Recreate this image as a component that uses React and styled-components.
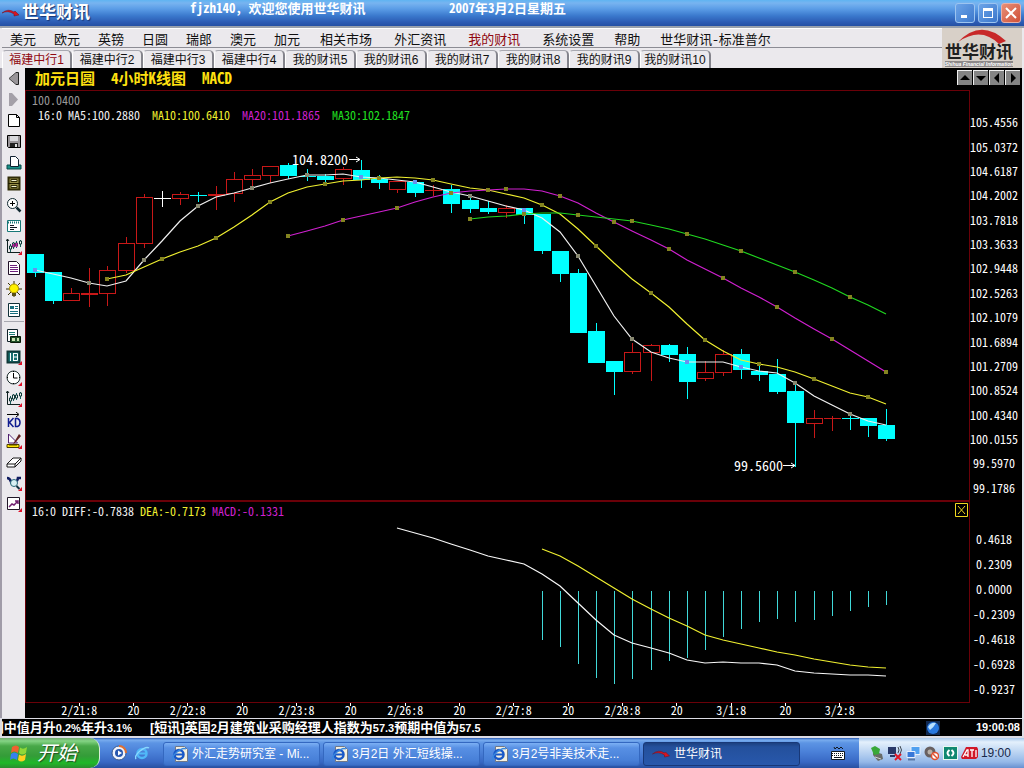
import React from "react";
import styled, { createGlobalStyle, css } from "styled-components";

const MONO = '"Noto Sans Mono CJK SC", "Noto Sans CJK SC", "Liberation Mono", monospace';
const SANS = '"Liberation Sans", "Noto Sans CJK SC", sans-serif';
const RED = "#c81818";
const CYAN = "#00ffff";
const WHITE = "#ffffff";
const FRAME = "#6a0008";

const GlobalStyle = createGlobalStyle`
  * { box-sizing: border-box; }
  body { margin: 0; background: #000; font-family: ${SANS}; font-size: 12px; line-height: 16px; }
  button { font: inherit; color: inherit; border: 0; padding: 0; margin: 0; background: none; }
  svg { display: block; flex: none; }
  h1, p { margin: 0; }
`;

const Page = styled.div`
  display: flex;
  flex-direction: column;
  min-height: 100vh;
`;

/* Title bar */
const TitleBar = styled.header`
  display: grid;
  grid-template-columns: 190px 259px 1fr auto;
  height: 26px;
  padding-right: 3px;
  color: #fff;
  background: linear-gradient(#5fb4f2 0, #78b4f0 3px, #5a9ce6 9px, #3a78cc 16px, #2c5cb4 22px, #2450a4 26px);
`;
const Brand = styled.h1`
  display: flex;
  align-items: center;
  gap: 3px;
  padding-left: 2px;
  font-size: 17px;
  line-height: 24px;
  font-weight: 700;
  text-shadow: 1px 1px 1px #1a3470;
`;
const TitleText = styled.p`
  font: 700 13px/16px ${MONO};
  white-space: pre;
`;
const WindowButtons = styled.div`
  display: flex;
  gap: 3px;
  align-items: center;
`;
const WindowButton = styled.button`
  display: grid;
  place-items: center;
  width: 20px;
  height: 20px;
  border: 1px solid ${(p) => (p.$danger ? "#e8b0a8" : "#9cc4f0")};
  border-radius: 3px;
  background: ${(p) =>
    p.$danger ? "linear-gradient(135deg, #e89078, #d05038)" : "linear-gradient(135deg, #6ca4e8, #3c78cc)"};
`;

/* Menu and tabs */
const TopArea = styled.div`
  display: grid;
  grid-template-columns: 1fr 80px;
  padding: 0 2px;
  border-top: 2px solid #98a0ac;
  background: #ebe9ed;
`;
const Menu = styled.nav`
  display: flex;
  height: 20px;
  border-top: 1px solid #fff;
  border-bottom: 1px solid #8c8c94;
`;
const MenuItem = styled.button`
  padding: 1px ${(p) => (p.$wide ? 11 : 9)}px 0 ${(p) => (p.$wide ? 11 : 9)}px;
  font: 13px/18px ${MONO};
  white-space: nowrap;
  color: ${(p) => (p.$active ? "#900810" : "#101010")};
  &:first-child { padding-left: 8px; }
`;
const Tabs = styled.div`
  display: flex;
  height: 20px;
  padding-top: 2px;
`;
const Tab = styled.button`
  width: 71px;
  height: 18px;
  font-size: 12px;
  line-height: 16px;
  white-space: nowrap;
  border-top: 1px solid #a8a8b0;
  border-right: 2px solid #84848c;
  border-left: 1px solid #fff;
  border-radius: 4px 5px 0 0;
  color: ${(p) => (p.$active ? "#900810" : "#101010")};
  &:first-child { width: 70px; }
`;
const Logo = styled.div`
  display: flex;
  flex-direction: column;
  align-items: center;
  height: 40px;
  padding-right: 6px;
  background: #d8d0c8;
`;
const LogoName = styled.span`
  font: 700 17px/17px ${SANS};
  color: #202020;
`;
const LogoSub = styled.span`
  font: italic 700 5px/6px "Liberation Sans", sans-serif;
  color: #fff;
  background: #8c8888;
`;

/* Work area */
const Work = styled.main`
  display: grid;
  grid-template-columns: 25px 1fr;
  flex: 1;
`;
const Toolbar = styled.aside`
  display: flex;
  flex-direction: column;
  border-left: 2px solid #a09ca8;
  background: #ebe9ed;
`;
const Tool = styled.button`
  display: grid;
  place-items: center;
  height: 21px;
`;
const ToolDivider = styled.hr`
  width: 20px;
  height: 1px;
  margin: 1px auto 3px;
  border: 0;
  background: #a8a8b0;
`;
const Charts = styled.section`
  display: flex;
  flex-direction: column;
  min-width: 0;
  border-right: 2px solid #e4e4ec;
  background: #000;
  color: #fff;
`;
const ChartHeader = styled.div`
  display: flex;
  justify-content: space-between;
  height: 22px;
  padding: 2px 2px 4px 10px;
`;
const ChartTitle = styled.div`
  display: flex;
  gap: 16px;
  font: 700 15px/16px ${MONO};
  color: #ffe010;
`;
const Scrollers = styled.div`
  display: flex;
  gap: 1px;
`;
const ScrollButton = styled.button`
  display: grid;
  place-items: center;
  width: 15px;
  height: 15px;
  border-top: 1px solid #f0f0f0;
  border-left: 1px solid #f0f0f0;
  background: #848484;
`;
const ChartGrid = styled.div`
  display: grid;
  grid-template-columns: minmax(0, 1fr) 52px;
`;
const Plot = styled.div`
  position: relative;
  border: solid ${FRAME};
  border-width: ${(p) => (p.$upper ? "1px 1px 2px" : "0 1px 1px")};
  svg.plot { width: 100%; height: auto; }
`;
const Legend = styled.div`
  position: absolute;
  top: 1px;
  left: 6px;
  font: 12px/15px ${MONO};
`;
const LegendRow = styled.div`
  display: flex;
  gap: ${(p) => (p.$indent ? 12 : 6)}px;
  padding-left: ${(p) => (p.$indent ? 6 : 0)}px;
`;
const LegendItem = styled.span`
  color: ${(p) => p.$color};
  white-space: pre;
`;
const ClosePane = styled.button`
  position: absolute;
  top: 1px;
  right: 1px;
  width: 13px;
  height: 14px;
`;
const Axis = styled.ol`
  display: grid;
  grid-auto-rows: 1fr;
  align-items: center;
  justify-items: center;
  list-style: none;
  margin: 0;
  padding: ${(p) => (p.$upper ? "20px 4px 2px 0" : "24px 4px 2px 0")};
  font: 12px/14px ${MONO};
`;
const TimeAxis = styled.ol`
  display: grid;
  grid-template-columns: repeat(15, 1fr);
  height: 15px;
  list-style: none;
  margin: 0;
  padding: 0 103px 0 27px;
  text-align: center;
  font: 12px/13px ${MONO};
`;
const TimeMark = styled.li`
  background: linear-gradient(#fff, #fff) center top / 1px 3px no-repeat;
`;

/* Ticker */
const Ticker = styled.footer`
  display: flex;
  align-items: center;
  height: 20px;
  padding: 0 2px 0 0;
  border: solid #dcdce4;
  border-width: 1px 2px 2px;
  font: 700 13px/17px ${SANS};
  color: #fff;
  background: #000;
  white-space: nowrap;
`;
const TickerText = styled.p`
  display: flex;
  gap: 18px;
  flex: 1;
  overflow: hidden;
`;
const TickerItem = styled.span`
  display: flex;
  justify-content: flex-end;
  overflow: hidden;
  ${(p) => p.$leaving && "width: 130px;"}
`;
const Figure = styled.span`
  font-size: 11px;
`;
const TickerClock = styled.time`
  margin-left: 36px;
  font: 700 11px/17px "Liberation Sans", sans-serif;
`;

/* Taskbar */
const Taskbar = styled.footer`
  display: flex;
  height: 30px;
  color: #fff;
  background: linear-gradient(#2858b0 0, #78acee 2px, #5c94e4 5px, #4a80d8 14px, #3868c4 24px, #2850a0 30px);
`;
const StartButton = styled.button`
  display: flex;
  align-items: center;
  gap: 9px;
  width: 100px;
  padding-left: 10px;
  border-radius: 0 10px 10px 0;
  border-right: 1px solid #d8f0d8;
  font: italic 20px/28px ${SANS};
  text-shadow: 1px 1px 1px #205020;
  background: linear-gradient(#70a870 0, #84d484 3px, #48a848 8px, #349c38 18px, #20b828 25px, #2c8c30 30px);
`;
const QuickLaunch = styled.div`
  display: flex;
  align-items: center;
  gap: 8px;
  width: 63px;
  padding-left: 11px;
`;
const Tasks = styled.div`
  display: flex;
  flex: 1;
  gap: 3px;
  padding: 4px 0 2px;
`;
const Task = styled.button`
  display: flex;
  align-items: center;
  gap: 4px;
  flex: 0 1 157px;
  min-width: 0;
  padding-left: 8px;
  border-radius: 3px;
  font-size: 12px;
  white-space: nowrap;
  border: 1px solid #3468c0;
  background: linear-gradient(#7cb0f4, #5890e4 5px, #4880d8 17px, #3c70c8);
  ${(p) =>
    p.$active &&
    css`
      border-color: #183878;
      background: linear-gradient(#1c4080, #24509c 4px, #2858ac);
    `}
`;
const InputMethod = styled.button`
  display: grid;
  place-items: center;
  width: 42px;
`;
const Tray = styled.div`
  display: flex;
  align-items: center;
  justify-content: space-between;
  width: 165px;
  padding: 0 13px 0 11px;
  color: #182848;
  background: linear-gradient(#a8c8ec 0, #e4f0fc 4px, #c4daf4 12px, #94b8e8 24px, #6890d0 30px);
`;

/* Icons */
const Icon = ({ w = 16, h = 16, children, box }) => (
  <svg width={w} height={h} viewBox={box || `0 0 ${w} ${h}`} aria-hidden="true">
    {children}
  </svg>
);
const Corner = () => <path d="M16 12v4h-4z" fill="#e01028" />;
const Swoosh = ({ w = 17, h = 8 }) => (
  <Icon w={w} h={h} box="0 0 17 8">
    <path d="M0 4Q6-1 12 3L13 2L17 6L12 7V5Q6 1 0 4z" fill="#d81420" stroke="#701020" strokeWidth=".5" />
  </Icon>
);
const Candles = () => (
  <g fill="none">
    <path d="M1.500 0V13.500H14M0 2l1.500-2l1.500 2" stroke="#102020" />
    <path d="M4.500 5v8M7.500 3v7M10.500 2v7M14.500 1v7" stroke="#186060" />
    <path d="M3.500 7h2v3h-2zM6.500 4h2v4h-2zM9.500 4h2v3h-2zM13.500 2h2v3h-2z" stroke="#103838" fill="#fff" />
  </g>
);

const TOOLS_A = [
  ["后退", <g><path d="M12.500 1.500v12H10L3 7.500L10 1.500z" fill="#989498" /><path d="M10 1.500h2.500v12H10" fill="none" stroke="#202020" /><path d="M10 1.500L3 7.500l7 6" fill="none" stroke="#484848" /></g>],
  ["前进", <path d="M3 1h3l6 6.500l-6 6.500H3z" fill="#a4a0a8" />],
  ["新建", <path d="M2.500 1.500h8l3 3v9h-11zM10.500 1.500v3h3" fill="#fff" stroke="#000" />],
  ["保存", <g><path d="M1.500 1.500h13v12h-12l-1-1z" fill="#989498" stroke="#000" /><path d="M4 2h8v5H4z" fill="#d8d8dc" /><path d="M4 9h8v4H4z" fill="#202020" /><path d="M9 10h2v3H9z" fill="#e0e0e0" /></g>],
  ["打印", <g><path d="M1 10h14v4H1z" fill="#189088" stroke="#084848" /><path d="M4.500 1.500h5l3 3v7h-8z" fill="#fff" stroke="#102030" /></g>],
  ["存档", <g><path d="M2.500 1.500h11v12h-11z" fill="#989048" stroke="#302c08" strokeWidth="2" /><path d="M2 7.500h12" stroke="#201c00" strokeWidth="1" /><path d="M5 3.500h6v2H5zM5 9.500h6v2H5z" fill="#f0f0d0" stroke="#302c08" /></g>],
  ["放大", <g><circle cx="6.500" cy="6.500" r="5" fill="#fff" stroke="#102830" /><path d="M4 6.500h5M6.500 4v5" stroke="#000" /><path d="M10.500 10.500l4 4" stroke="#102830" strokeWidth="2.500" /></g>],
  ["窗口", <g><path d="M1.500 2.500h13v11h-13z" fill="#fff" stroke="#187878" /><path d="M2 4.500h12" stroke="#187878" strokeWidth="2" strokeDasharray="1 1" /><path d="M4 7.500h4M4 9.500h7M4 11.500h4" stroke="#101820" /></g>],
  ["K线", <g><Candles /><path d="M7.500 5v3M10.500 4v4" stroke="#c020a0" strokeWidth="2" /><Corner /></g>],
  ["文档", <g><path d="M2.500 1.500h8l3 3v10h-11z" fill="#fff" stroke="#201028" /><path d="M4 5.500h7M4 7.500h8M4 9.500h8M4 11.500h8" stroke="#702080" /></g>],
  ["提示", <g><path d="M8 0v16M0 8h16M2 2l12 12M14 2L2 14" stroke="#383000" /><circle cx="8" cy="7.500" r="4.500" fill="#fff000" stroke="#a89000" /><path d="M6 12h4v3H6z" fill="#585018" /></g>],
  ["资讯", <g><path d="M2.500 1.500h11v13h-11z" fill="#fff" stroke="#103038" /><path d="M4 4h4v3H4z" fill="#187080" /><path d="M9 4.500h3M9 6.500h3M4 9.500h8M4 11.500h8" stroke="#187080" /></g>],
];
const TOOLS_B = [
  ["报表", <g><path d="M1.500 1.500h10v12h-10z" fill="#fff" stroke="#102028" /><path d="M3 4.500h6M3 6.500h6" stroke="#208078" /><path d="M4.500 8.500h10v6h-10z" fill="#205028" stroke="#081808" /><path d="M6 10h3v3H6zM11 10h2v3h-2z" fill="#c8e0b0" /></g>],
  ["面板", <g><path d="M1.500 2.500h12v11h-12z" fill="#187070" stroke="#103838" strokeWidth="2" /><path d="M4.500 4v8M7.500 4v8M7.500 4.500h4v7h-4M7.500 8h4" fill="none" stroke="#fff" /><Corner /></g>],
  ["时间", <g><circle cx="7.500" cy="7.500" r="6.500" fill="#fff" stroke="#203030" /><path d="M7.500 3v5h4" fill="none" stroke="#000" /><path d="M7.500 1v1M7.500 13v1M1 7.500h1M13 7.500h1" stroke="#000" /><Corner /></g>],
  ["行情", <g><Candles /><Corner /></g>],
  ["KD", null],
  ["画图", <g><path d="M2.500 1v9h9z" fill="#fff" stroke="#502070" /><path d="M13 1l2 2l-6 7l-2 1z" fill="#602020" /><path d="M1 11.500h12v3H1z" fill="#ffe800" stroke="#504000" /><path d="M4 12v1M6 12v1M8 12v1M10 12v1" stroke="#504000" /><Corner /></g>],
  ["橡皮", <path d="M1 10l6-6h8l-6 6zM1 10v3h8v-3M9 13l6-6V4" fill="#fff" stroke="#181818" />],
  ["选股", <g><path d="M1 3q3 0 4 4t4 1t3-5h3" fill="none" stroke="#101c60" strokeWidth="2.500" /><circle cx="8" cy="8" r="3.500" fill="#d8f0f4" stroke="#286878" /><path d="M10.500 11l3 3" stroke="#103040" strokeWidth="2" /><Corner /></g>],
  ["走势", <g><path d="M1.500 1.500h12v12h-12z" fill="#fff" stroke="#201828" /><path d="M3 11l3-3l2 1l4-4M9 5h3v3" fill="none" stroke="#702070" strokeWidth="1.500" /><Corner /></g>],
];
const KdIcon = () => (
  <Icon>
    <path d="M1 2.500h11M10 0l3 2.500l-3 2.500" fill="none" stroke="#000" />
    <path d="M2.500 6v9M7.500 6l-4 4.500l4 4.500" fill="none" stroke="#101c90" strokeWidth="1.500" />
    <path d="M9.500 6.500v8h2q2.500-1 2.500-4t-2.500-4z" fill="none" stroke="#101c90" strokeWidth="1.500" />
  </Icon>
);
const IeIcon = ({ page }) => (
  <Icon>
    {page && <path d="M3.500 .5h9l3 3v12h-12z" fill="#f4f0e0" stroke="#707888" />}
    <circle cx="7" cy="8.500" r="4.500" fill="none" stroke={page ? "#1858c8" : "#50b8f8"} strokeWidth="2.500" />
    <path d="M4 8.500h7" stroke={page ? "#1858c8" : "#50b8f8"} strokeWidth="2" />
    <path d="M1 14Q-1 11 5 6T14 3" fill="none" stroke={page ? "#3888e0" : "#88d8ff"} strokeWidth="1.500" />
  </Icon>
);
const WindowsFlag = () => (
  <Icon w={18} h={18}>
    <path d="M2 3q4-3 7 0l-1 6q-4-3-7 0z" fill="#f06030" />
    <path d="M10 3.500q3 2.500 7-.5l-1 6q-4 3-7 0z" fill="#90d838" />
    <path d="M1 10q3-3 7 0l-1 6q-4-3-7 0z" fill="#3880f0" />
    <path d="M9 10.500q3 2.500 7-.5l-1 6q-4 3-7 0z" fill="#ffd020" />
  </Icon>
);

/* Market data: colour, high, top of body, bottom of body, low, in chart units */
const CANDLES = [
  "c 254 254 273 277", "c 272 272 301 304", "r 288 293 300 300", "r 268 293 294 307", "r 266 270 293 306",
  "r 237 243 270 273", "r 194 197 243 248", "w 191 198 198 207", "r 192 194 198 205", "c 192 195 195 202",
  "r 186 194 195 210", "r 172 179 193 202", "r 169 175 179 188", "r 166 166 175 183", "c 163 165 176 179",
  "c 169 176 176 181", "c 174 176 180 182", "r 167 169 178 185", "c 160 170 180 188", "c 175 179 183 189",
  "r 181 181 189 193", "c 182 182 193 197", "r 185 190 190 196", "c 185 189 204 213", "c 197 200 209 213",
  "c 201 208 212 214", "r 205 208 212 218", "c 208 208 215 224", "c 214 214 251 254", "c 251 251 274 282",
  "c 269 273 333 333", "c 323 331 363 363", "c 361 361 372 395", "r 343 352 371 374", "r 344 345 352 381",
  "c 344 345 355 362", "c 347 354 382 399", "r 361 372 378 381", "r 350 354 372 376", "c 349 354 370 379",
  "c 366 371 375 381", "c 359 374 392 394", "c 385 391 423 467", "r 410 418 423 438", "r 416 418 418 431",
  "c 416 418 418 430", "c 418 418 426 437", "c 409 425 439 441",
].map((s) => {
  const [k, high, top, bottom, low] = s.split(" ");
  return { color: { c: CYAN, r: RED, w: WHITE }[k], filled: k === "c", high: +high, top: +top, bottom: +bottom, low: +low };
});
const AVERAGES = [
  { color: "#f0f0f0", start: 0, values: [270, 274, 278, 283, 286, 281, 260, 241, 221, 206, 197, 193, 188, 183, 179, 175, 175, 174, 177, 178, 180, 182, 187, 192, 196, 201, 206, 210, 218, 232, 256, 286, 316, 339, 352, 358, 362, 362, 362, 367, 371, 373, 383, 396, 405, 414, 421, 425] },
  { color: "#f0f030", start: 4, values: [279, 275, 267, 259, 252, 246, 238, 227, 215, 202, 193, 187, 184, 181, 180, 178, 177, 178, 180, 184, 188, 190, 194, 198, 205, 214, 229, 246, 263, 279, 293, 307, 324, 340, 351, 360, 364, 367, 372, 379, 386, 393, 397, 404] },
  { color: "#d020d0", start: 14, values: [236, 231, 226, 220, 216, 212, 208, 202, 197, 193, 191, 190, 189, 189, 191, 196, 203, 213, 222, 231, 240, 249, 260, 269, 278, 288, 297, 307, 318, 329, 339, 350, 361, 372] },
  { color: "#20d820", start: 24, values: [219, 217, 216, 214, 213, 213, 215, 217, 219, 221, 225, 229, 234, 239, 245, 251, 258, 265, 272, 280, 288, 297, 305, 314] },
];
const DIFF = { color: "#f8f8f8", start: 20, values: [528, 533, 538, 544, 550, 556, 560, 564, 574, 586, 603, 620, 635, 643, 648, 653, 660, 663, 662, 663, 663, 665, 671, 673, 674, 675, 675, 676] };
const DEA = { color: "#f0f030", start: 28, values: [549, 556, 566, 577, 588, 599, 609, 618, 626, 635, 640, 644, 648, 652, 655, 659, 662, 665, 667, 668] };
const HISTOGRAM = [640, 647, 664, 678, 684, 679, 670, 661, 658, 650, 637, 629, 622, 619, 622, 620, 616, 611, 607, 605];

const xAt = (i) => Math.round(35 + i * 18.106);
const points = (s) => s.values.map((y, i) => `${xAt(i + s.start)},${y}`).join(" ");
const Line = ({ series }) => (
  <polyline points={points(series)} fill="none" stroke={series.color} strokeWidth="1.2" />
);

function Candle({ i, c }) {
  const x = xAt(i);
  const flat = c.bottom - c.top < 2;
  return (
    <g stroke={c.color} shapeRendering="crispEdges">
      <path d={`M${x + 0.5} ${c.high}V${c.top}M${x + 0.5} ${c.bottom}V${c.low}`} />
      {flat ? (
        <path d={`M${x - 8} ${c.top + 0.5}h17`} strokeWidth={c.bottom > c.top ? 2 : 1} />
      ) : c.filled ? (
        <rect x={x - 8} y={c.top} width="17" height={c.bottom - c.top} fill={c.color} stroke="none" />
      ) : (
        <rect x={x - 7.5} y={c.top + 0.5} width="16" height={c.bottom - c.top} fill="none" />
      )}
    </g>
  );
}

function PriceChart() {
  return (
    <svg className="plot" viewBox="26 91 943 409" role="img" aria-label="加元日圆 4小时K线图">
      {CANDLES.map((c, i) => <Candle key={i} i={i} c={c} />)}
      {AVERAGES.map((s) => <Line key={s.color} series={s} />)}
      {AVERAGES.map((s) =>
        s.values.map((y, i) =>
          i % 3 === 0 ? (
            <rect key={s.color + i} x={xAt(i + s.start) - 2} y={y - 2} width="4" height="4"
              fill={s.start === 0 ? (CANDLES[i].filled && y >= CANDLES[i].top && y <= CANDLES[i].bottom ? "#6890f0" : "#888870") : "#848420"} />
          ) : null
        )
      )}
      <g fill="#fff" fontFamily={MONO} fontSize="14">
        <text x="292" y="165">104.8200</text>
        <text x="734" y="471">99.5600</text>
      </g>
      <path d="M349 159.500h11M356 157l4 2.500l-4 2.500M783 465.500h12M791 463l4 2.500l-4 2.500" fill="none" stroke="#fff" />
    </svg>
  );
}

function MacdChart() {
  return (
    <svg className="plot" viewBox="26 502 943 200" role="img" aria-label="MACD">
      <g stroke="#40d8d8" shapeRendering="crispEdges">
        {HISTOGRAM.map((y, i) => <path key={i} d={`M${xAt(i + 28) + 0.5} 591V${y}`} />)}
      </g>
      <Line series={DIFF} />
      <Line series={DEA} />
    </svg>
  );
}

const MENU = ["美元", "欧元", "英镑", "日圆", "瑞郎", "澳元", "加元", "相关市场", "外汇资讯", "我的财讯", "系统设置", "帮助", "世华财讯-标准普尔"];
const TABS = ["福建中行1", "福建中行2", "福建中行3", "福建中行4", "我的财讯5", "我的财讯6", "我的财讯7", "我的财讯8", "我的财讯9", "我的财讯10"];
const PRICES = ["105.4556", "105.0372", "104.6187", "104.2002", "103.7818", "103.3633", "102.9448", "102.5263", "102.1079", "101.6894", "101.2709", "100.8524", "100.4340", "100.0155", "99.5970", "99.1786"];
const LEVELS = ["0.4618", "0.2309", "0.0000", "-0.2309", "-0.4618", "-0.6928", "-0.9237"];
const TIMES = ["2/21:8", "20", "2/22:8", "20", "2/23:8", "20", "2/26:8", "20", "2/27:8", "20", "2/28:8", "20", "3/1:8", "20", "3/2:8"];
const NEWS = ["期中值月升0.2%年升3.1%", "[短讯]英国2月建筑业采购经理人指数为57.3预期中值为57.5"];
const TASKS = ["外汇走势研究室 - Mi...", "3月2日 外汇短线操...", "3月2号非美技术走..."];
const ARROWS = [["上", "M2 8h10L7 3z"], ["下", "M2 4h10L7 9z"], ["左", "M9 1v10L4 6z"], ["右", "M5 1v10l5-5z"]];

/* Figures are set smaller than the Chinese text around them */
const withFigures = (text) =>
  text.split(/([\d.%]+)/).map((part, i) => (i % 2 ? <Figure key={i}>{part}</Figure> : part));

export default function App() {
  return (
    <Page>
      <GlobalStyle />
      <TitleBar>
        <Brand><Swoosh />世华财讯</Brand>
        <TitleText>fjzh140, 欢迎您使用世华财讯</TitleText>
        <TitleText>2007年3月2日星期五</TitleText>
        <WindowButtons>
          <WindowButton aria-label="最小化"><Icon w={12} h={12}><path d="M2 8h6v3H2z" fill="#fff" /></Icon></WindowButton>
          <WindowButton aria-label="最大化"><Icon w={12} h={12}><path d="M1 1h10v10H1zM2 4v6h8V4z" fillRule="evenodd" fill="#fff" /></Icon></WindowButton>
          <WindowButton $danger aria-label="关闭"><Icon w={12} h={12}><path d="M1 1l10 10M11 1L1 11" stroke="#fff" strokeWidth="2" /></Icon></WindowButton>
        </WindowButtons>
      </TitleBar>

      <TopArea>
        <div>
          <Menu>
            {MENU.map((m) => <MenuItem key={m} $wide={m.length > 2} $active={m === "我的财讯"}>{m}</MenuItem>)}
          </Menu>
          <Tabs role="tablist">
            {TABS.map((t, i) => <Tab key={t} role="tab" aria-selected={i === 0} $active={i === 0}>{t}</Tab>)}
          </Tabs>
        </div>
        <Logo>
          <Icon w={60} h={16}>
            <path d="M9 14Q32-10 57 13L50 16Q32-2 9 14z" fill="#c82828" />
          </Icon>
          <LogoName>世华财讯</LogoName>
          <LogoSub>Shihua Financial Information</LogoSub>
        </Logo>
      </TopArea>

      <Work>
        <Toolbar>
          {TOOLS_A.map(([name, art]) => <Tool key={name} aria-label={name}><Icon>{art}</Icon></Tool>)}
          <ToolDivider />
          {TOOLS_B.map(([name, art]) => (
            <Tool key={name} aria-label={name}>{art ? <Icon>{art}</Icon> : <KdIcon />}</Tool>
          ))}
        </Toolbar>
        <Charts>
          <ChartHeader>
            <ChartTitle><span>加元日圆</span><span>4小时K线图</span><span>MACD</span></ChartTitle>
            <Scrollers>
              {ARROWS.map(([name, d]) => (
                <ScrollButton key={name} aria-label={name}><Icon w={14} h={12}><path d={d} fill="#000" /></Icon></ScrollButton>
              ))}
            </Scrollers>
          </ChartHeader>
          <ChartGrid>
            <Plot $upper>
              <PriceChart />
              <Legend>
                <LegendRow><LegendItem $color="#989898">100.0400</LegendItem></LegendRow>
                <LegendRow $indent>
                  <LegendItem $color="#f0f0f0">16:0 MA5:100.2880</LegendItem>
                  <LegendItem $color="#f0f030">MA10:100.6410</LegendItem>
                  <LegendItem $color="#d020d0">MA20:101.1865</LegendItem>
                  <LegendItem $color="#20e020">MA30:102.1847</LegendItem>
                </LegendRow>
              </Legend>
            </Plot>
            <Axis $upper>{PRICES.map((p) => <li key={p}>{p}</li>)}</Axis>
            <Plot>
              <MacdChart />
              <Legend>
                <LegendRow>
                  <LegendItem $color="#f0f0f0">16:0 DIFF:-0.7838</LegendItem>
                  <LegendItem $color="#f0f030">DEA:-0.7173</LegendItem>
                  <LegendItem $color="#d020d0">MACD:-0.1331</LegendItem>
                </LegendRow>
              </Legend>
              <ClosePane aria-label="关闭指标">
                <Icon w={13} h={14}>
                  <path d="M.5 .5h12v13H.5zM3 3l7 8M10 3l-7 8" fill="none" stroke="#f0d820" />
                </Icon>
              </ClosePane>
            </Plot>
            <Axis>{LEVELS.map((p) => <li key={p}>{p}</li>)}</Axis>
            <TimeAxis>{TIMES.map((t, i) => <TimeMark key={i}>{t}</TimeMark>)}</TimeAxis>
          </ChartGrid>
        </Charts>
      </Work>

      <Ticker>
        <TickerText>
          {NEWS.map((n, i) => (
            <TickerItem key={n} $leaving={i === 0}><span>{withFigures(n)}</span></TickerItem>
          ))}
        </TickerText>
        <Icon w={14} h={14}>
          <path d="M0 0h14v14H0z" fill="#102850" />
          <circle cx="7" cy="7" r="6" fill="#2878e0" />
          <path d="M2 6q3-5 8-4q-2 4-6 7z" fill="#b8e0ff" />
        </Icon>
        <TickerClock>19:00:08</TickerClock>
      </Ticker>

      <Taskbar>
        <StartButton><WindowsFlag />开始</StartButton>
        <QuickLaunch>
          <Icon>
            <circle cx="8" cy="8" r="7" fill="#f0f4fc" stroke="#385890" />
            <path d="M8 1a7 7 0 0 1 7 7" fill="none" stroke="#e07030" strokeWidth="2" />
            <circle cx="8" cy="8" r="4" fill="#2858b0" />
            <path d="M7 5.500v5l4-2.500z" fill="#fff" />
          </Icon>
          <IeIcon />
        </QuickLaunch>
        <Tasks>
          {TASKS.map((t) => <Task key={t}><IeIcon page />{t}</Task>)}
          <Task $active><Swoosh w={18} />世华财讯</Task>
        </Tasks>
        <InputMethod aria-label="输入法">
          <Icon w={14} h={14}>
            <path d="M3 1l1 2l2-2l2 2l2-2l2 2" fill="none" stroke="#101820" />
            <path d="M.5 5.500h13v8H.5z" fill="#fff" stroke="#101820" />
            <path d="M1 7.500h12M1 9.500h12" stroke="#101820" strokeDasharray="1 1" />
            <path d="M3 11.500h8" stroke="#101820" />
          </Icon>
        </InputMethod>
        <Tray>
          <Icon w={15} h={16}><path d="M3 6l9 3l1 5l-5 2l-5-6z" fill="#686c68" /><path d="M1 3l4-2l5 3l-1 5l-5 1z" fill="#38a838" /><path d="M5 12l6 2" stroke="#d0d0d0" /></Icon>
          <Icon w={15} h={16}><path d="M0 2h8v7H0zM2 10h5v2H2z" fill="#283868" /><path d="M10 2q2 3 0 6M12 1q3 4 0 8" fill="none" stroke="#404850" /><path d="M7 9l6 6M13 9l-6 6" stroke="#e01828" strokeWidth="2" /></Icon>
          <Icon w={15} h={16}><path d="M5 1.500h9v8H5z" fill="#50a0f0" stroke="#e8f0fc" /><path d="M1 6.500h8v6H1z" fill="#3878d8" stroke="#e8f0fc" /><path d="M2 14.500h7" stroke="#5878a8" strokeWidth="2" /></Icon>
          <Icon w={15} h={16}><circle cx="6" cy="7" r="5.500" fill="#686060" /><circle cx="6" cy="7" r="2.500" fill="#b8b0a8" /><circle cx="11" cy="11" r="3.500" fill="#fff" stroke="#e05030" strokeWidth="1.500" /><path d="M9 9l4 4" stroke="#e05030" strokeWidth="1.500" /></Icon>
          <Icon w={15} h={16}><path d="M0 1h15v14H0z" fill="#e8f8f0" /><path d="M1 2h13v12H1z" fill="#108870" /><path d="M6.500 5q-4 3 0 6M8.500 5q4 3 0 6" fill="none" stroke="#fff" strokeWidth="2" /></Icon>
          <Icon w={17} h={12}><path d="M5 0h11l1 2v8l-2 2H1L0 10z" fill="#d01828" /><path d="M2 10l4-7h1v7M4 8h3M9 3h4M11 3v7M15 3v7" fill="none" stroke="#fff" strokeWidth="1.300" /></Icon>
          <time>19:00</time>
        </Tray>
      </Taskbar>
    </Page>
  );
}
